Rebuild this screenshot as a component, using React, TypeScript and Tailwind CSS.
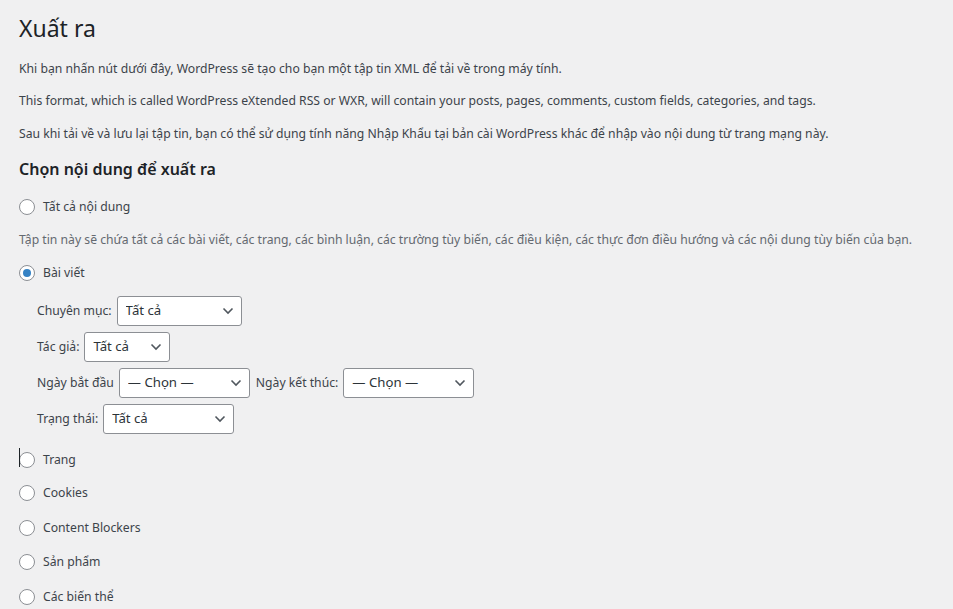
import React from "react";

const font = { fontFamily: '"Noto Sans", "Liberation Sans", sans-serif' };

function Radio({ label, checked = false, className = "" }: { label: string; checked?: boolean; className?: string }) {
  return (
    <label className={`flex items-center h-5 text-[12.2px] text-[#3c434a] ${className}`}>
      <span className="w-4 h-4 rounded-full border border-[#8c8f94] bg-white flex items-center justify-center shrink-0">
        {checked && <span className="w-2 h-2 rounded-full bg-[#3582c4]" />}
      </span>
      <span className="ml-2">{label}</span>
    </label>
  );
}

function Select({ value, width }: { value: string; width: string }) {
  return (
    <div className={`relative h-[30px] ${width} shrink-0`}>
      <select
        defaultValue={value}
        className="appearance-none w-full h-full bg-white border border-[#8c8f94] rounded-[3px] pl-2 pr-6 text-[13.2px] text-[#2c3338] outline-none"
        style={font}
      >
        <option>{value}</option>
      </select>
      <svg className="absolute right-[7px] top-[9px] pointer-events-none" width="14" height="12" viewBox="0 0 14 12">
        <path d="M2.5 3.5 L7 8 L11.5 3.5" fill="none" stroke="#50575e" strokeWidth="1.6" />
      </svg>
    </div>
  );
}

function FilterRow({ children, className = "" }: { children: React.ReactNode; className?: string }) {
  return <div className={`flex items-center h-[30px] text-[12.2px] text-[#3c434a] ${className}`}>{children}</div>;
}

export default function App() {
  return (
    <div className="min-h-screen bg-[#f0f0f1] pl-[19px] overflow-hidden" style={font}>
      <div className="flex flex-col">
        <h1 className="mt-[13px] text-[23px] leading-[30px] text-[#1d2327] font-normal">Xuất ra</h1>
        <p className="mt-[16px] text-[12.2px] leading-5 text-[#3c434a]">
          Khi bạn nhấn nút dưới đây, WordPress sẽ tạo cho bạn một tập tin XML để tải về trong máy tính.
        </p>
        <p className="mt-[12px] text-[12.2px] leading-5 text-[#3c434a]">
          This format, which is called WordPress eXtended RSS or WXR, will contain your posts, pages, comments, custom fields, categories, and tags.
        </p>
        <p className="mt-[13px] text-[12.2px] leading-5 text-[#3c434a]">
          Sau khi tải về và lưu lại tập tin, bạn có thể sử dụng tính năng Nhập Khẩu tại bản cài WordPress khác để nhập vào nội dung từ trang mạng này.
        </p>
        <h2 className="mt-[13px] text-[16px] leading-6 font-semibold text-[#1d2327]">Chọn nội dung để xuất ra</h2>

        <Radio label="Tất cả nội dung" className="mt-[16px]" />
        <p className="mt-[13px] text-[12.2px] leading-5 text-[#646970] whitespace-nowrap">
          Tập tin này sẽ chứa tất cả các bài viết, các trang, các bình luận, các trường tùy biến, các điều kiện, các thực đơn điều hướng và các nội dung tùy biến của bạn.
        </p>
        <Radio label="Bài viết" checked className="mt-[13px]" />

        <div className="pl-[18px] flex flex-col">
          <FilterRow className="mt-[13px]">
            <span className="mr-[5px]">Chuyên mục:</span>
            <Select value="Tất cả" width="w-[125px]" />
          </FilterRow>
          <FilterRow className="mt-[6px]">
            <span className="mr-[5px]">Tác giả:</span>
            <Select value="Tất cả" width="w-[86px]" />
          </FilterRow>
          <FilterRow className="mt-[6px]">
            <span className="mr-[5px]">Ngày bắt đầu</span>
            <Select value="— Chọn —" width="w-[131px]" />
            <span className="ml-[6px] mr-[5px]">Ngày kết thúc:</span>
            <Select value="— Chọn —" width="w-[131px]" />
          </FilterRow>
          <FilterRow className="mt-[6px]">
            <span className="mr-[5px]">Trạng thái:</span>
            <Select value="Tất cả" width="w-[131px]" />
          </FilterRow>
        </div>

        <div className="relative">
          <span className="absolute left-0 top-[14px] w-px h-[19px] bg-[#1d2327]" />
          <Radio label="Trang" className="mt-[16px]" />
        </div>
        <Radio label="Cookies" className="mt-[13px]" />
        <Radio label="Content Blockers" className="mt-[15px]" />
        <Radio label="Sản phẩm" className="mt-[14px]" />
        <Radio label="Các biến thể" className="mt-[15px]" />
      </div>
    </div>
  );
}
